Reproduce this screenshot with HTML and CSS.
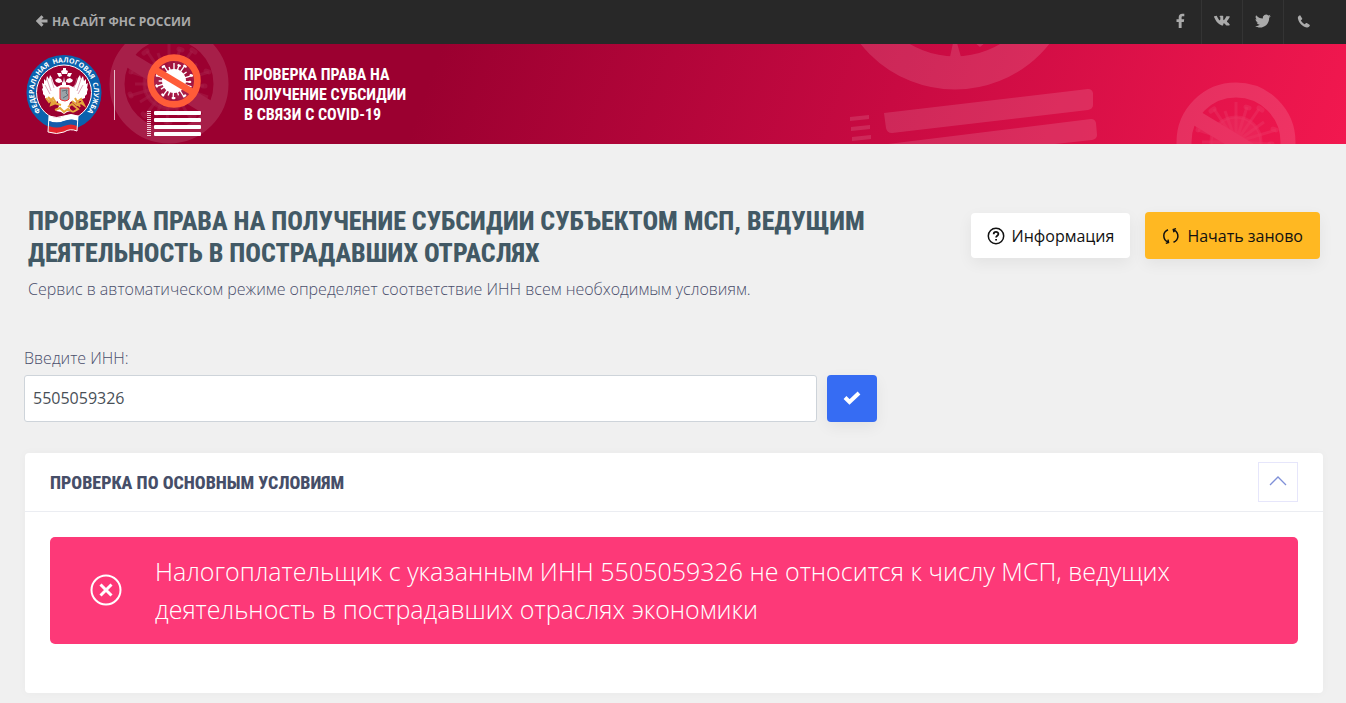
FILE: index.html
```
<!DOCTYPE html>
<html lang="ru">
<head>
    <meta charset="UTF-8">
    <meta name="viewport" content="width=device-width, initial-scale=1.0">
    <title>Проверка права на получение субсидии</title>
    <link rel="stylesheet" href="styles.css">
</head>
<body>
    <!-- общие символы -->
    <svg class="sprite" aria-hidden="true">
        <symbol id="virus" viewBox="-60 -60 120 120">
            <g class="virus-body">
                <circle r="25"/>
                <path d="M0 0V-40M0 0L11-35M0 0L23-33M0 0L28-20M0 0L40-12M0 0L35 2M0 0L39 13M0 0L29 21M0 0L22 35M0 0L10 32M0 0L-2 40M0 0L-13 32M0 0L-24 32M0 0L-29 18M0 0L-40 12M0 0L-34 0M0 0L-38-12M0 0L-30-22M0 0L-22-33M0 0L-11-31"/>
                <path class="virus-knobs" d="M10-35l3 1M23-34l3 2M37-13l3 1M34 2h2M22 34l3-2M-3 38h4M-24 32l-2-2M-38 12l-1-2M-38-12l1-3M-22-33l-3 2"/>
            </g>
            <g class="virus-sign">
                <circle r="52"/>
                <path d="M-43-26L43 26"/>
            </g>
        </symbol>
    </svg>

    <div class="topbar">
        <a href="#" class="back-link">
            <svg width="12" height="12" viewBox="0 0 12 12"><path d="M6.500 1.200L1.800 6l4.700 4.800M2 6h9.500"/></svg>
            НА САЙТ ФНС РОССИИ
        </a>
        <nav class="socials">
            <a href="#" aria-label="Facebook">
                <svg width="16" height="16" viewBox="0 0 16 16"><path d="M5.700 15V9H3.500V6.200h2.200V4.200C5.700 1.900 7.100.7 9.200.7c1 0 1.800.1 2.100.1v2.500H9.900c-1.100 0-1.300.5-1.300 1.300v1.600h2.600L10.800 9H8.600v6z"/></svg>
            </a>
            <a href="#" aria-label="ВКонтакте">
                <svg width="16" height="16" viewBox="-1 -1.500 18 18"><path d="M7.800 12.500h1s.3 0 .4-.2c.2-.2.2-.5.2-.5s0-1.500.7-1.700c.7-.2 1.500 1.400 2.400 2.100.7.500 1.200.4 1.200.4l2.300-.1s1.200-.1.600-1c0-.1-.4-.8-1.900-2.200-1.600-1.500-1.400-1.200.5-3.900C16.400 3.800 16.800 2.800 16.700 2.400c-.1-.4-.9-.3-.9-.3l-2.600 0s-.2 0-.3.1c-.2.1-.2.300-.2.300s-.4 1.100-1 2C10.500 6.500 10 6.600 9.800 6.500c-.5-.3-.4-1.200-.4-1.800 0-2 .3-2.800-.6-3-.3-.1-.5-.1-1.200-.1-1 0-1.800 0-2.200.2-.3.2-.6.500-.4.500.2 0 .6.100.8.400.3.400.3 1.200.3 1.200s.2 2.400-.4 2.700c-.4.200-1-.2-2.200-2.300-.6-1-1.100-2.200-1.100-2.200s-.1-.2-.2-.3c-.2-.1-.4-.2-.4-.2L-.5 2.200s-.4 0-.5.200c-.1.100 0 .4 0 .4s1.900 4.500 4.100 6.800c2 2.100 4.700 2.900 4.700 2.900z"/></svg>
            </a>
            <a href="#" aria-label="Twitter">
                <svg width="16" height="16" viewBox="0.700 0.500 15 15"><path d="M15.500 3.400c-.5.200-1.100.4-1.700.5.600-.4 1.100-1 1.300-1.700-.6.400-1.200.6-1.900.7A3.100 3.100 0 0 0 8 5.700C5.500 5.600 3.200 4.400 1.700 2.500c-.8 1.500-.4 3.200.9 4.100-.5 0-1-.1-1.400-.4 0 1.500 1 2.800 2.500 3.100-.5.100-.9.100-1.400.1.400 1.200 1.600 2.100 2.900 2.100A6.300 6.300 0 0 1 .6 12.800c5.900 3.600 13.500-.1 13.400-7.800.600-.4 1.100-1 1.500-1.600z"/></svg>
            </a>
            <a href="#" aria-label="Телефон">
                <svg width="16" height="16" viewBox="0.500 0 15 15"><path d="M4.700 2.500l1.600 2.600c.2.400.1.700-.2.900L5 6.900c.8 1.600 2 2.800 3.700 3.700l1-1.100c.2-.3.600-.3.900-.1l2.600 1.600c.4.300.4.700.2 1-.7 1.300-1.700 1.800-2.900 1.500C6.100 12.400 3.300 9.500 2.300 5.100 2 3.900 2.600 2.900 3.800 2.300c.3-.2.700-.1.900.2z"/></svg>
            </a>
        </nav>
    </div>

    <header class="header">
        <svg class="art art-left" width="120" height="120"><use href="#virus"/></svg>
        <svg class="art art-right" width="526" height="100" viewBox="0 0 526 100">
            <circle class="art-ring" cx="135" cy="-75" r="104"/>
            <path class="art-fill" d="M130 13l3-14h4l4 14zM154-2h12l-6 5z"/>
            <path class="art-fill" d="M64 69L268 45q4 0 5 4v12q0 4-5 5L72 89q-5 0-6-5zM68 100L271 75q4 0 5 4l1 12q0 4-5 5L226 101H68z"/>
            <path class="art-fill" d="M30 73l19-2v4l-19 2zM31 83l19-2v4l-19 2zM32 93l19-2v4l-19 2z"/>
            <use href="#virus" x="356" y="38" width="120" height="120"/>
        </svg>

        <a href="#" class="emblem" aria-label="Федеральная налоговая служба">
            <svg width="80" height="84" viewBox="24 52 80 84">
                <defs>
                    <path id="ring" d="M45 115.700A30 30 0 1 1 83 115.700"/>
                </defs>
                <circle cx="64" cy="92.500" r="32.500" fill="none" stroke="#0a62ae" stroke-width="10"/>
                <circle cx="64" cy="92.500" r="27.500" fill="none" stroke="#fff"/>
                <text class="emblem-text"><textPath href="#ring" startOffset="50%">ФЕДЕРАЛЬНАЯ&nbsp; НАЛОГОВАЯ&nbsp; СЛУЖБА</textPath></text>
                <g fill="#fff">
                    <path d="M63 68h3v2l2 1-1 3h-5l-1-3 2-1zM57 73h4l1 3-3 1zM68 73h4l-2 4-3-1z"/>
                    <path d="M62 90V82l-3 1-3-1-1-2 3-2 3 1 2 4 1-6 1 6 2-4 3-1 3 2-1 2-3 1-3-1v8z"/>
                    <path d="M61 85l-4 2-3-3-2-6-2-3-1 4-2-3-1 5-2-2 0 5-2-1 1 5-1 1 1 3 0 2 2 2 0 2 3 1 1 2 3-1 2 3 4-2 7 5 7-5 4 2 2-3 3 1 1-2 3-1 0-2 2-2 0-2 1-3-1-1 1-5-2 1 0-5-2 2-1-5-2 3-1-4-2 3-2 6-3 3-4-2z"/>
                    <path d="M57 98h14l-2 8 2 5-4 1-3 2-3-2-5-1 3-5z"/>
                </g>
                <path d="M47 79l4 12M51 78l3 10M45 85l5 9M81 79l-4 12M77 78l-3 10M83 85l-5 9" stroke="#c9708e" stroke-width=".6"/>
                <path d="M46 98l3 4 4-4 3 5-5 2 1-4M48 97l6 6 7 2M72 101l5 4 4-2 3 2-3-6-4 3M68 107l4-3 6 5-5 3M55 110l5-2 4 4 4-3 5 3M75 98l5 9" fill="none" stroke="#e5a63c" stroke-width="2"/>
                <path d="M60 88h9v11q0 1-4 2-5-1-5-2z" fill="#9aa3a8" stroke="#ee2d30"/>
                <path d="M62 91l5-1-1 3 2 2-5 3" fill="none" stroke="#5f7078"/>
                <path d="M49 116q8 3 15 0t14 0v5q-7-3-14 0t-15 0z" fill="#fff"/>
                <path d="M49 121q8 3 15 0t14 0v5q-7-3-14 0t-15 0z" fill="#155baa"/>
                <path d="M49 126q8 3 15 0t13 0v5q-7-3-13 1-7 3-16 0z" fill="#e3242b"/>
                <path d="M49 116q8 3 15 0t14 0l-1 15q-7-3-13 1-7 3-16 0z" fill="none" stroke="#fff"/>
            </svg>
        </a>

        <a href="#" class="service-logo">
            <svg class="service-icon" width="56" height="84" viewBox="146 52 56 84">
                <use href="#virus" x="147" y="53" width="54" height="54"/>
                <g fill="#fff">
                    <rect x="154" y="110" width="47" height="4" rx="1"/>
                    <rect x="154" y="117" width="47" height="4" rx="1"/>
                    <rect x="154" y="124" width="47" height="4" rx="1"/>
                    <rect x="154" y="131" width="47" height="4" rx="1"/>
                </g>
                <path d="M149 110v25" stroke="#fff" stroke-width="4" stroke-dasharray="1" opacity=".8"/>
            </svg>
            <span>ПРОВЕРКА ПРАВА НА<br>ПОЛУЧЕНИЕ СУБСИДИИ<br>В СВЯЗИ С COVID-19</span>
        </a>
    </header>

    <main class="container">
        <div class="page-head">
            <div class="page-title">
                <h1>ПРОВЕРКА ПРАВА НА ПОЛУЧЕНИЕ СУБСИДИИ СУБЪЕКТОМ МСП, ВЕДУЩИМ ДЕЯТЕЛЬНОСТЬ В ПОСТРАДАВШИХ ОТРАСЛЯХ</h1>
                <p>Сервис в автоматическом режиме определяет соответствие ИНН всем необходимым условиям.</p>
            </div>
            <div class="page-actions">
                <button type="button" class="btn btn-white">
                    <svg width="18" height="18" viewBox="0 0 18 18"><circle cx="9" cy="9" r="7.700"/><path d="M6.700 7.200c0-3 4.700-3 4.700-.2 0 1.800-2.300 1.800-2.300 3.600M9.100 12v1.500" stroke-width="1.800"/></svg>
                    Информация
                </button>
                <button type="button" class="btn btn-warning">
                    <svg width="18" height="18" viewBox="0 0 18 18"><path d="M6 2.700C.4 5 .4 12.400 6 15.200M3.800 16.400L6.500 15.500 6 12.700M11.500 15.300c5.800-2.300 5.800-9.700.4-12.500M14 1.600L11.300 2.500l.7 2.800"/></svg>
                    Начать заново
                </button>
            </div>
        </div>

        <form class="search-form" onsubmit="return false">
            <div class="form-group">
                <label for="inn">Введите ИНН:</label>
                <div class="input-row">
                    <input type="text" id="inn" name="inn" value="5505059326" maxlength="12">
                    <button type="submit" class="btn btn-primary" aria-label="Проверить">
                        <svg width="18" height="16" viewBox="0 0 18 16"><path d="M2 6.500l4.500 4.500L16 2"/></svg>
                    </button>
                </div>
            </div>
        </form>

        <!-- результат проверки -->
        <section class="card">
            <div class="card-header">
                <h2>ПРОВЕРКА ПО ОСНОВНЫМ УСЛОВИЯМ</h2>
                <button type="button" class="btn-toggle" aria-label="Свернуть">
                    <svg width="18" height="12" viewBox="0 0 18 12"><path d="M1 9l8-8 8 8"/></svg>
                </button>
            </div>
            <div class="card-body">
                <div class="alert" role="alert">
                    <svg width="32" height="32" viewBox="0 0 32 32"><circle cx="16" cy="16" r="14.500" stroke-width="2"/><path d="M10.500 10.500l11 11M21.500 10.500l-11 11" stroke-width="3"/></svg>
                    <p>Налогоплательщик с указанным ИНН 5505059326 не относится к числу МСП, ведущих деятельность в пострадавших отраслях экономики</p>
                </div>
            </div>
        </section>
    </main>
</body>
</html>
```
FILE: styles.css
```
* {
    margin: 0;
    padding: 0;
    box-sizing: border-box;
}

body {
    font-family: 'Open Sans', 'Noto Sans', sans-serif;
    font-size: 16px;
    font-weight: 300;
    color: #494e6b;
    background: #f0f0f0;
}

a {
    color: inherit;
    text-decoration: none;
}

.sprite {
    display: none;
}

/* верхняя полоса */
.topbar {
    display: flex;
    justify-content: space-between;
    height: 44px;
    padding: 0 22px 0 36px;
    background: #282828;
    color: #aaa;
}

.back-link {
    display: flex;
    align-items: center;
    gap: 4px;
    padding-bottom: 2px;
    font-size: 12px;
    font-weight: 700;
}

.back-link svg {
    fill: none;
    stroke: currentColor;
    stroke-width: 3;
}

.socials {
    display: flex;
}

.socials a {
    display: flex;
    align-items: center;
    justify-content: center;
    width: 41px;
    padding-bottom: 3px;
    border-left: 1px solid #343434;
}

.socials a:first-child {
    border-left: none;
}

.socials svg {
    fill: currentColor;
    overflow: visible;
}

/* шапка */
.header {
    position: relative;
    display: flex;
    align-items: center;
    height: 100px;
    padding-left: 24px;
    overflow: hidden;
    background: linear-gradient(110deg, #9b0030 0%, #9b0030 32%, #c80a42 66%, #f2184f 100%);
    color: #fff;
}

.virus-body {
    fill: var(--virus, #fff);
    stroke: var(--virus, #fff);
    stroke-width: 3;
}

.virus-knobs {
    stroke-width: 5;
    stroke-linecap: round;
}

.virus-sign {
    fill: none;
    stroke: var(--sign, #fff);
    stroke-width: 15;
}

.art {
    position: absolute;
    top: 0;
    opacity: 0.12;
    --virus: rgba(255, 255, 255, 0.5);
}

.art-left {
    top: -20px;
    left: 109px;
}

.art-right {
    right: 0;
}

.art-ring {
    fill: none;
    stroke: #fff;
    stroke-width: 33;
}

.art-fill {
    fill: #fff;
}

.emblem,
.service-logo {
    position: relative;
    display: flex;
}

.emblem-text {
    font-size: 7px;
    font-weight: 700;
    text-anchor: middle;
    fill: #fff;
}

.service-logo {
    align-items: center;
    gap: 42px;
    margin-left: 10px;
    padding-top: 1px;
    font-family: 'Roboto Condensed', 'Liberation Sans Narrow', 'Roboto', sans-serif;
    font-size: 16px;
    font-weight: 700;
    line-height: 20px;
}

.service-logo::before {
    content: '';
    width: 1px;
    height: 50px;
    margin-right: -11px;
    background: rgba(255, 255, 255, 0.7);
}

.service-icon {
    --virus: #fff;
    --sign: #ff5c38;
}

/* содержимое */
.container {
    padding: 61px 24px 10px;
}

.page-head {
    display: flex;
    justify-content: space-between;
    align-items: flex-start;
    gap: 24px;
    margin-bottom: 46px;
    padding: 0 2px 0 4px;
}

.page-title {
    flex: 1;
}

h1,
h2 {
    font-family: 'Roboto Condensed', 'Liberation Sans Narrow', 'Roboto', sans-serif;
    font-weight: 800;
}

h1 {
    margin-bottom: 9px;
    font-size: 26px;
    line-height: 32px;
    color: #425965;
}

.page-title p {
    line-height: 22px;
}

.page-actions {
    display: flex;
    align-items: center;
    gap: 15px;
    padding-top: 7px;
}

.btn {
    display: flex;
    align-items: center;
    justify-content: center;
    gap: 7px;
    height: 47px;
    padding: 0 17px;
    border: none;
    border-radius: 4px;
    box-shadow: 0 5px 15px rgba(0, 0, 0, 0.06);
    font-family: inherit;
    font-size: 16px;
    color: #111;
    cursor: pointer;
}

.btn svg {
    fill: none;
    stroke: currentColor;
    stroke-width: 1.5;
}

.btn-white {
    height: 45px;
    padding: 0 16px;
    background: #fff;
}

.btn-warning {
    background: #ffb822;
}

.btn-primary {
    width: 50px;
    padding: 0;
    background: #366cf3;
    color: #fff;
}

.btn-primary svg {
    stroke-width: 4;
}

.search-form {
    display: grid;
    grid-template-columns: 2fr 1fr;
    gap: 18px;
    margin-bottom: 31px;
}

.form-group label {
    display: block;
    margin-bottom: 5px;
    line-height: 24px;
}

.input-row {
    display: flex;
    gap: 10px;
}

.input-row input {
    flex: 1;
    height: 47px;
    padding: 0 8px 2px;
    border: 1px solid #ced4da;
    border-radius: 3px;
    font-family: inherit;
    font-size: 16px;
    color: #495057;
    background: #fff;
}

.card {
    margin: 0 -1px 0 1px;
    border-radius: 4px;
    background: #fff;
    box-shadow: 0 0 10px rgba(0, 0, 0, 0.03);
}

.card-header {
    display: flex;
    align-items: center;
    justify-content: space-between;
    height: 59px;
    padding: 0 25px;
    border-bottom: 1px solid #ebedf2;
}

.card-header h2 {
    font-size: 18px;
    color: #464e68;
}

.btn-toggle {
    display: flex;
    align-items: center;
    justify-content: center;
    width: 40px;
    height: 40px;
    border: 1px solid #e6e6fb;
    background: #fff;
    cursor: pointer;
}

.btn-toggle svg {
    fill: none;
    stroke: #7f90d8;
    stroke-width: 1.3;
}

.card-body {
    padding: 25px 25px 49px;
}

.alert {
    display: flex;
    align-items: center;
    gap: 33px;
    padding: 15px 40px 16px;
    border-radius: 5px;
    background: #fd3978;
    color: #fff;
}

.alert svg {
    flex: none;
    fill: none;
    stroke: #fff;
}

.alert p {
    font-size: 25px;
    line-height: 38px;
}
```
